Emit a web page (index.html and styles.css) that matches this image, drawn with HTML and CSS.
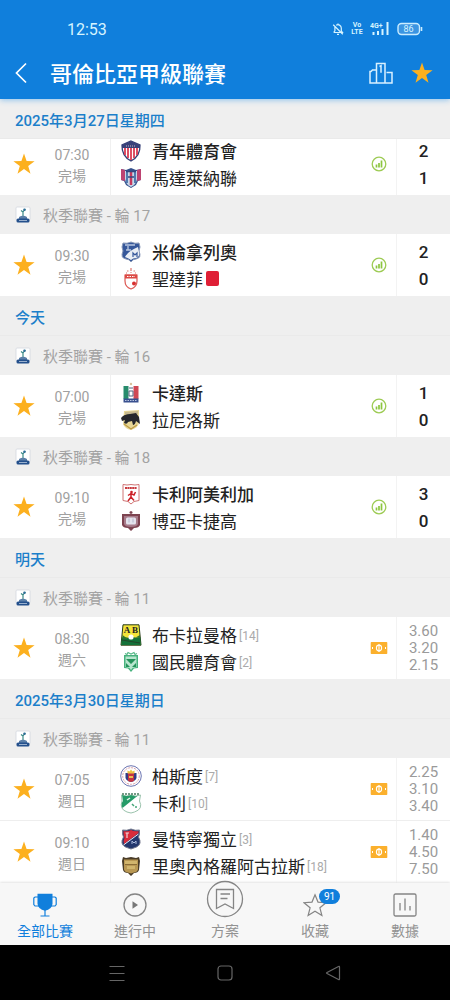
FILE: index.html
```
<!DOCTYPE html>
<html lang="zh-Hant">
<head>
    <meta charset="UTF-8">
    <meta name="viewport" content="width=device-width, initial-scale=1.0">
    <title>哥倫比亞甲級聯賽</title>
    <link rel="stylesheet" href="styles.css">
</head>
<body>

<!-- Shared icons -->
<svg class="sprite" aria-hidden="true">
    <symbol id="star" viewBox="0 0 24 24">
        <path d="M12 1.500l2.600 7.600 8 .1-6.400 4.800 2.300 7.700-6.500-4.600-6.500 4.600 2.300-7.700L1.400 9.200l8-.1z" fill="#fcb01f"/>
    </symbol>
    <symbol id="league" viewBox="0 0 16 18">
        <rect x="1" y="1" width="14" height="13" rx="1" fill="#fff" stroke="#d3d7de" stroke-width=".8"/>
        <path d="M8 10V5.500M8 6l2.200-3M6 4.500l2 1.500" stroke="#3a8a86" stroke-width="1.200" fill="none"/>
        <circle cx="9.500" cy="3.800" r="1.300" fill="#2d6d96"/>
        <path d="M4 11q4-2.500 8 0v2H4z" fill="#5b7fa8"/>
        <rect x="1.500" y="12.500" width="13" height="4" rx="1.500" fill="#24508c"/>
        <path d="M4 14.500h8" stroke="#b7c9df" stroke-width=".8"/>
    </symbol>
    <symbol id="stats" viewBox="0 0 16 16">
        <circle cx="8" cy="8" r="6.800" fill="#fff" stroke="#9dcb54" stroke-width="1.300"/>
        <path d="M5.500 8.500v3M8 7v4.500M10.500 4.500v7" stroke="#8cc63f" stroke-width="1.700"/>
    </symbol>
    <symbol id="ticket" viewBox="0 0 18 14">
        <path d="M1.500 1h15q.8 0 .8.800v10.400q0 .8-.8.800h-15q-.8 0-.8-.8V1.800q0-.8.8-.8z" fill="#fbb02d"/>
        <ellipse cx="9" cy="7" rx="2.600" ry="2.900" fill="none" stroke="#fff" stroke-width="1.100"/>
        <path d="M9 3v8" stroke="#fff" stroke-width="1.100"/>
        <path d="M2.500 6v2M15.500 6v2" stroke="#fff" stroke-width="1"/>
    </symbol>
</svg>

<header class="header">
    <div class="status">
        <span class="clock">12:53</span>
        <div class="status-icons">
            <svg width="12" height="14" viewBox="0 0 12 14" fill="none" stroke="#d6f4ff" stroke-width="1.200">
                <path d="M2 10.500h8.500L9.300 8.800V6A3.300 3.300 0 0 0 4.200 3.300M2.900 5v3.800L1.600 10.500M6 1.500v1M5 12.300h2M1.200 2.800l9.600 9.400"/>
            </svg>
            <span class="volte"><b>Vo</b><b>LTE</b></span>
            <svg width="20" height="14" viewBox="0 0 20 14">
                <text x="0" y="6" class="net">4G+</text>
                <path d="M3.500 10v3M8 9v4M12.500 7v6M17.500 0v13" stroke="#d6f4ff" stroke-width="2"/>
            </svg>
            <svg class="battery" width="26" height="14" viewBox="0 0 26 14">
                <rect x="1" y="1.500" width="21.500" height="11" rx="3.500" fill="#3b95e2" stroke="#c9ecff" stroke-width="1.400"/>
                <path d="M24.500 5v4" stroke="#c9ecff" stroke-width="1.600"/>
                <text x="6.500" y="10" class="charge">86</text>
            </svg>
        </div>
    </div>
    <div class="titlebar">
        <button class="icon-btn back" aria-label="返回">
            <svg width="14" height="22" viewBox="0 0 14 22" fill="none" stroke="#fff" stroke-width="1.700"><path d="M12 1.500L2.500 11l9.500 9.500"/></svg>
        </button>
        <h1>哥倫比亞甲級聯賽</h1>
        <button class="icon-btn" aria-label="排名">
            <svg width="26" height="24" viewBox="0 0 26 24" fill="none" stroke="#d9f1ff" stroke-width="1.500">
                <path d="M8.500 22V2.500h8.500V22M8.500 9H4.500l-1.500 1.500H2V22h22V11.500h-5.500M11.500 5.500l1.500-.8v7"/>
            </svg>
        </button>
        <button class="icon-btn" aria-label="收藏">
            <svg width="24" height="24"><use href="#star"/></svg>
        </button>
    </div>
</header>

<main class="list">
    <h2 class="day">2025年3月27日星期四</h2>
    <article class="match first">
        <button class="fav" aria-label="收藏"><svg width="24" height="24"><use href="#star"/></svg></button>
        <div class="time"><span>07:30</span><span>完場</span></div>
        <div class="teams">
            <div class="team win">
                <svg viewBox="0 0 22 22">
                    <path d="M11 1l9 4q.5 11-9 16Q1.500 16 2 5z" fill="#fff" stroke="#353f77" stroke-width="1.300"/>
                    <path d="M5 8v7M8 8v10M11 8v12M14 8v10M17 8v7" stroke="#d82f49" stroke-width="1.700"/>
                    <path d="M11 1l9 4v3H2V5z" fill="#38417a"/>
                    <path d="M6 6h10" stroke="#c8b0be" stroke-width="1" stroke-dasharray="1 1"/>
                </svg>
                <span>青年體育會</span>
            </div>
            <div class="team">
                <svg viewBox="0 0 22 22">
                    <path d="M1 2l5 1 5-2 5 2 5-1v11l-3 1-2 4-5 3-5-3-2-4-3-1z" fill="#34508c"/>
                    <path d="M1 2l4 1v11l-4-1zM17 3l4-1v11l-4 1z" fill="#bd4372"/>
                    <path d="M5 4h12v8q-1 6-6 8-5-2-6-8z" fill="#c5d7ea"/>
                    <path d="M7 5v11M15 5v11" stroke="#3563a0" stroke-width="1.600"/>
                    <path d="M11 5v13" stroke="#c7385e" stroke-width="2.500"/>
                    <path d="M6 4.500h10M8 10h6" stroke="#34477f" stroke-width="1.500"/>
                </svg>
                <span>馬達萊納聯</span>
            </div>
        </div>
        <div class="info"><svg width="16" height="16"><use href="#stats"/></svg></div>
        <div class="score"><span>2</span><span>1</span></div>
    </article>

    <h3 class="league"><svg width="16" height="18"><use href="#league"/></svg>秋季聯賽 - 輪 17</h3>
    <article class="match">
        <button class="fav" aria-label="收藏"><svg width="24" height="24"><use href="#star"/></svg></button>
        <div class="time"><span>09:30</span><span>完場</span></div>
        <div class="teams">
            <div class="team win">
                <svg viewBox="0 0 22 22">
                    <path d="M3 2q4 1 8-1 4 2 8 1l1 4-1 4q3 7-3 8-3 0-5 3-2-3-5-3-6-1-3-8L2 6z" fill="#35579a" stroke="#8999b8" stroke-width="1"/>
                    <path d="M5 16q3-6 13-10l1 5q1 5-3 6-3 0-5 2-3-2-6-3z" fill="#e9eef5"/>
                    <path d="M5 4h10M8 5v4M6 9h5" stroke="#b9c8e1" stroke-width="1.300"/>
                    <path d="M13 16v-4l2 2 2-2v4" fill="none" stroke="#35579a" stroke-width="1.200"/>
                </svg>
                <span>米倫拿列奧</span>
            </div>
            <div class="team">
                <svg viewBox="0 0 22 22">
                    <path d="M5 7h12v6q0 6-6 8-6-2-6-8z" fill="#fff" stroke="#dc5752" stroke-width="1.200"/>
                    <path d="M5 6.500h12v4H5z" fill="#dc4944"/>
                    <path d="M7 8.500h8" stroke="#fff" stroke-width="1" stroke-dasharray="1.500 1"/>
                    <circle cx="14" cy="15.500" r="2" fill="#d7302f"/>
                    <path d="M11 0v3M7 3h1.500M13.500 3H15M6 5h1M10.500 4.500h1M15 5h1" stroke="#dc7770" stroke-width="1.200"/>
                </svg>
                <span>聖達菲</span><i class="redcard"></i>
            </div>
        </div>
        <div class="info"><svg width="16" height="16"><use href="#stats"/></svg></div>
        <div class="score"><span>2</span><span>0</span></div>
    </article>

    <h2 class="day">今天</h2>
    <h3 class="league"><svg width="16" height="18"><use href="#league"/></svg>秋季聯賽 - 輪 16</h3>
    <article class="match">
        <button class="fav" aria-label="收藏"><svg width="24" height="24"><use href="#star"/></svg></button>
        <div class="time"><span>07:00</span><span>完場</span></div>
        <div class="teams">
            <div class="team win">
                <svg viewBox="0 0 22 22">
                    <rect x="3.500" y="4" width="15" height="13" fill="#fff"/>
                    <path d="M3.500 4h5v13h-5z" fill="#278b6c"/>
                    <path d="M13.500 4h5v13h-5z" fill="#d04754"/>
                    <path d="M3.500 16.500h15v4h-15z" fill="#39508f"/>
                    <path d="M9 6h4M9 9h4v5H9z" fill="none" stroke="#53617e" stroke-width="1"/>
                    <path d="M5 18.500h12" stroke="#b8c4df" stroke-width="1.200" stroke-dasharray="1.500 1"/>
                    <circle cx="11" cy="2" r="1.200" fill="#d9c19a"/>
                </svg>
                <span>卡達斯</span>
            </div>
            <div class="team">
                <svg viewBox="0 0 22 22">
                    <path d="M4 2l15-1v13q-1 5-8 7-6-1-8-6z" fill="#e8d796"/>
                    <path d="M5 3l13-1v3H5z" fill="#c6b991"/>
                    <path d="M1 9q3-4 9-4l6-1 3 4 1 7-4-3q-1 4-3 4l-1-4-4 1q-1 3-4 1l1-3-3 1z" fill="#26272c"/>
                    <path d="M4 15l7 5 6-4" fill="none" stroke="#bd9b45" stroke-width="1.200"/>
                </svg>
                <span>拉尼洛斯</span>
            </div>
        </div>
        <div class="info"><svg width="16" height="16"><use href="#stats"/></svg></div>
        <div class="score"><span>1</span><span>0</span></div>
    </article>

    <h3 class="league"><svg width="16" height="18"><use href="#league"/></svg>秋季聯賽 - 輪 18</h3>
    <article class="match">
        <button class="fav" aria-label="收藏"><svg width="24" height="24"><use href="#star"/></svg></button>
        <div class="time"><span>09:10</span><span>完場</span></div>
        <div class="teams">
            <div class="team win">
                <svg viewBox="0 0 22 22">
                    <path d="M3 1.500q4 1 8 0 4 1 8 0v16l-5 1-3 2.500-3-2.500-5-1z" fill="#fff" stroke="#d07474" stroke-width="1"/>
                    <path d="M5 5h12" stroke="#c93a3f" stroke-width="1.800" stroke-dasharray="2 .4"/>
                    <circle cx="11.500" cy="9" r="1.300" fill="#cc2027"/>
                    <path d="M11 10v4l-3 4M11 14l3 3.500M8 12.500l3-2 3 1.500 1.500-3" fill="none" stroke="#cc2027" stroke-width="1.500"/>
                </svg>
                <span>卡利阿美利加</span>
            </div>
            <div class="team">
                <svg viewBox="0 0 22 22">
                    <path d="M2 4h18v11q-1 3-6 3l-3 3-3-3q-5 0-6-3z" fill="#7d4350"/>
                    <path d="M4 6h14v8q-1 3-7 3-6 0-7-3z" fill="#a77b8a"/>
                    <rect x="6" y="7.500" width="10" height="7" rx="1.500" fill="#e4e3ed"/>
                    <path d="M9 8.500v4M13 8.500v4" stroke="#b5b8cf" stroke-width="1"/>
                    <path d="M11 1v3M9.500 2.500h3" stroke="#7d4350" stroke-width="1.300"/>
                </svg>
                <span>博亞卡捷高</span>
            </div>
        </div>
        <div class="info"><svg width="16" height="16"><use href="#stats"/></svg></div>
        <div class="score"><span>3</span><span>0</span></div>
    </article>

    <h2 class="day">明天</h2>
    <h3 class="league"><svg width="16" height="18"><use href="#league"/></svg>秋季聯賽 - 輪 11</h3>
    <article class="match">
        <button class="fav" aria-label="收藏"><svg width="24" height="24"><use href="#star"/></svg></button>
        <div class="time"><span>08:30</span><span>週六</span></div>
        <div class="teams">
            <div class="team">
                <svg viewBox="0 0 22 22">
                    <path d="M3 .8h16l2 20.400H1z" fill="#f4e43a" stroke="#263918" stroke-width="1"/>
                    <path d="M1.800 13q5 3 9-1 4 3 9.500 1l.5 8H1.200z" fill="#147139"/>
                    <path d="M2.500 11q4 4 8 2 4 2 9.500-2v3l-9-1-8.500 3z" fill="#2f7430"/>
                    <circle cx="11" cy="13" r="2.600" fill="#fff"/>
                    <path d="M2 16l18 3" stroke="#23452a" stroke-width="1"/>
                    <text x="11" y="8.500" text-anchor="middle" class="crest-text">A B</text>
                </svg>
                <span>布卡拉曼格</span><small>[14]</small>
            </div>
            <div class="team">
                <svg viewBox="0 0 22 22">
                    <path d="M4 4h14v13l-4 .5-3 3.500-3-3.500-4-.5z" fill="#47b27d"/>
                    <path d="M5.500 5.500h11v10.500l-4 1-1.500 2-1.500-2-4-1z" fill="#b8e5ce"/>
                    <path d="M6 8h10l-5 5zM6 12l4 4H6zM16 12l-4 4h4z" fill="#25935b"/>
                    <path d="M5 2.500l2 1 1-2 3 1.500 3-1.500 1 2 2-1" fill="none" stroke="#58b989" stroke-width="1.200"/>
                </svg>
                <span>國民體育會</span><small>[2]</small>
            </div>
        </div>
        <div class="info"><svg width="18" height="14"><use href="#ticket"/></svg></div>
        <div class="odds"><span>3.60</span><span>3.20</span><span>2.15</span></div>
    </article>

    <h2 class="day">2025年3月30日星期日</h2>
    <h3 class="league"><svg width="16" height="18"><use href="#league"/></svg>秋季聯賽 - 輪 11</h3>
    <article class="match line">
        <button class="fav" aria-label="收藏"><svg width="24" height="24"><use href="#star"/></svg></button>
        <div class="time"><span>07:05</span><span>週日</span></div>
        <div class="teams">
            <div class="team">
                <svg viewBox="0 0 22 22">
                    <circle cx="11" cy="11" r="10.300" fill="#fff" stroke="#6c75b2" stroke-width="1"/>
                    <circle cx="11" cy="11" r="8.300" fill="none" stroke="#d9a1aa" stroke-width="1" stroke-dasharray="2 1"/>
                    <path d="M5.500 8h11v5q-1 3-5.500 4-4.500-1-5.500-4z" fill="#323d84"/>
                    <path d="M8 8h6v8l-3 1-3-1z" fill="#c43343"/>
                    <path d="M7.500 5.500l2 1 1.500-2 1.500 2 2-1v3h-7z" fill="#ecc442"/>
                    <path d="M9 11h4v2H9z" fill="#eac050"/>
                </svg>
                <span>柏斯度</span><small>[7]</small>
            </div>
            <div class="team">
                <svg viewBox="0 0 22 22">
                    <path d="M1.500 3q5 2 9.500 0 4.500 2 9.500 0l-1 6q4 8-5 11l-3.500 1-4-1q-8-3-5-11z" fill="#fff" stroke="#9bc3ad" stroke-width="1"/>
                    <path d="M2 3q5 2 9 0 4 2 7 .5L2.500 16q-2-4 .5-7z" fill="#269b68"/>
                    <path d="M2 2h18" stroke="#497b60" stroke-width="1.500" stroke-dasharray="2 1"/>
                    <path d="M7 8l3-2" stroke="#e3f4ea" stroke-width="1.500"/>
                    <path d="M12 12l2 2M16 14v2" stroke="#45a679" stroke-width="1.500"/>
                </svg>
                <span>卡利</span><small>[10]</small>
            </div>
        </div>
        <div class="info"><svg width="18" height="14"><use href="#ticket"/></svg></div>
        <div class="odds"><span>2.25</span><span>3.10</span><span>3.40</span></div>
    </article>
    <article class="match">
        <button class="fav" aria-label="收藏"><svg width="24" height="24"><use href="#star"/></svg></button>
        <div class="time"><span>09:10</span><span>週日</span></div>
        <div class="teams">
            <div class="team">
                <svg viewBox="0 0 22 22">
                    <path d="M2.500 2q4 1 8.500-1 4.500 2 8.500 1v4l-1 3q4 7-2 10l-5.500 2-5.500-2q-6-3-2-10l-1-3z" fill="#22366d" stroke="#777b8f" stroke-width="1"/>
                    <path d="M3.500 3q4 1 7.500-1 4 2 7.500 1v2L4 16q-1-3 .5-6l-1-4z" fill="#d92c3b"/>
                    <path d="M3.500 17L18.500 6" stroke="#e8e8f0" stroke-width="1"/>
                    <path d="M7 5v5M5.500 5H9" stroke="#eed6dc" stroke-width="1.200"/>
                    <path d="M12 16v-3l2 2 2-2v3" fill="none" stroke="#aab9dc" stroke-width="1"/>
                </svg>
                <span>曼特寧獨立</span><small>[3]</small>
            </div>
            <div class="team">
                <svg viewBox="0 0 22 22">
                    <path d="M3 2l3 1 5-1 5 1 3-1 1 4-1 9q-1 3-5 3l-3 3-3-3q-4 0-5-3L2 6z" fill="#493b27"/>
                    <path d="M4 4.500h14v10q-1 3-4 3l-3 1-3-1q-3 0-4-3z" fill="#b99853"/>
                    <path d="M5 6h12v3H5zM7 11h8v3H7z" fill="#d1b56d"/>
                    <path d="M5 9.500h12" stroke="#8b6c36" stroke-width="1"/>
                </svg>
                <span>里奧內格羅阿古拉斯</span><small>[18]</small>
            </div>
        </div>
        <div class="info"><svg width="18" height="14"><use href="#ticket"/></svg></div>
        <div class="odds"><span>1.40</span><span>4.50</span><span>7.50</span></div>
    </article>
</main>

<footer class="footer">
    <nav class="tabs">
        <a href="#" class="tab active">
            <svg width="24" height="24" viewBox="0 0 24 24">
                <path d="M4.500.8h15v10q-.5 5.500-7.500 7-7-1.500-7.500-7z" fill="#107fdc"/>
                <path d="M5 4H2L.8 5v6.500L2 13h4M19 4h3l1.200 1v6.500L22 13h-4M12 17v5.500M7.500 23h9" fill="none" stroke="#107fdc" stroke-width="1.200"/>
            </svg>
            <span>全部比賽</span>
        </a>
        <a href="#" class="tab">
            <svg width="24" height="24" viewBox="0 0 24 24">
                <circle cx="12" cy="12" r="11" fill="none" stroke="#858585" stroke-width="1.300"/>
                <path d="M9.500 8.300v7.400l5.500-3.700z" fill="#777"/>
            </svg>
            <span>進行中</span>
        </a>
        <a href="#" class="tab plan">
            <svg width="38" height="38" viewBox="0 0 38 38" fill="none" stroke="#858585" stroke-width="1.300">
                <circle cx="19" cy="19" r="17.500" fill="#f7f7f7"/>
                <path d="M10.500 9.500h17v19L19 24l-8.500 4.500zM14.500 14h9.500M14.500 18.500h7"/>
            </svg>
            <span>方案</span>
        </a>
        <a href="#" class="tab">
            <svg width="24" height="24" viewBox="0 0 24 24" fill="none" stroke="#858585" stroke-width="1.200">
                <path d="M12 1.800l3 7.300 8 .6-6.100 5.100 2 7.700-6.900-4.200-6.900 4.200 2-7.700L1 9.700l8-.6z"/>
            </svg>
            <b class="badge">91</b>
            <span>收藏</span>
        </a>
        <a href="#" class="tab">
            <svg width="24" height="24" viewBox="0 0 24 24" fill="none" stroke="#858585" stroke-width="1.300">
                <rect x="1" y="1" width="22" height="22" rx="1.500"/>
                <path d="M7 10v7.500M12 5.500v12M17 13v4.500"/>
            </svg>
            <span>數據</span>
        </a>
    </nav>
    <div class="sysbar">
        <button aria-label="選單"><svg width="18" height="18" viewBox="0 0 18 18" fill="none" stroke="#666" stroke-width="1"><path d="M1.500 2.500h15M1.500 9.500h15M1.500 16.500h15"/></svg></button>
        <button aria-label="主頁"><svg width="18" height="18" viewBox="0 0 18 18" fill="none" stroke="#666" stroke-width="1.200"><rect x="2" y="2" width="14" height="14" rx="3"/></svg></button>
        <button aria-label="上一頁"><svg width="18" height="18" viewBox="0 0 18 18" fill="none" stroke="#666" stroke-width="1.200"><path d="M15.500 3v12q0 1-1 .5L3 9.500q-1-.5 0-1L14.500 2.500q1-.5 1 .5z"/></svg></button>
    </div>
</footer>

</body>
</html>
```
FILE: styles.css
```
* {
    box-sizing: border-box;
}

body {
    margin: 0;
    min-height: 100vh;
    display: flex;
    flex-direction: column;
    background: #efefef;
    color: #222;
    font-family: Roboto, "Noto Sans CJK TC", sans-serif;
}

button {
    border: 0;
    padding: 0;
    background: none;
    cursor: pointer;
}

svg {
    display: block;
    flex: none;
}

.sprite {
    position: absolute;
    width: 0;
    height: 0;
}

/* Header */
.header {
    position: sticky;
    top: 0;
    z-index: 3;
    height: 99px;
    background: #107fdc;
    box-shadow: 0 1px 6px #8cc1ec;
}

.status {
    display: flex;
    justify-content: space-between;
    align-items: center;
    height: 50px;
    padding: 8px 27px 0 67px;
    color: #d6f4ff;
}

.clock {
    font-size: 16px;
}

.status-icons {
    display: flex;
    align-items: center;
    gap: 7px;
}

.volte {
    display: flex;
    flex-direction: column;
    align-items: center;
    width: 12px;
    font-size: 7px;
    line-height: 7px;
}

.net {
    font-size: 7px;
    font-weight: 700;
    fill: #d6f4ff;
}

.charge {
    font-size: 9px;
    fill: #d6f4ff;
}

.titlebar {
    display: flex;
    align-items: center;
    height: 45px;
    padding: 0 16px 0 14px;
    gap: 16px;
}

.titlebar h1 {
    flex: 1;
    margin: 0;
    padding: 0 0 2px 6px;
    color: #fff;
    font-size: 22px;
    font-weight: 500;
}

/* Match list */
.list {
    flex: 1;
}

.day {
    position: relative;
    z-index: 1;
    display: flex;
    align-items: center;
    height: 40px;
    margin: 0;
    padding: 2px 0 0 15px;
    background: #efefef;
    border-bottom: 1px solid #eaeaea;
    color: #1c7fca;
    font-size: 15px;
    font-weight: 500;
}

.league {
    display: flex;
    align-items: center;
    gap: 12px;
    height: 39px;
    margin: 0;
    padding-left: 15px;
    color: #a3a3a3;
    font-size: 15px;
    font-weight: 400;
}

.match {
    display: grid;
    grid-template-columns: 34px 77px 1fr 36px 53px;
    height: 62px;
    background: #fff;
}

/* scrolled partly under the day bar */
.match.first {
    margin-top: -6px;
}

.match.line {
    height: 63px;
    border-bottom: 1px solid #eee;
}

.fav {
    display: flex;
    align-items: center;
    padding-left: 12px;
}

.time {
    display: flex;
    flex-direction: column;
    justify-content: center;
    align-items: center;
    padding-top: 3px;
    border-right: 1px solid #f0f0f0;
    color: #a0a0a0;
    font-size: 14px;
    line-height: 21px;
}

.teams {
    padding: 4px 0 0 9px;
    min-width: 0;
}

.team {
    display: flex;
    align-items: center;
    height: 27px;
    font-size: 17px;
    white-space: nowrap;
}

.team svg {
    width: 22px;
    height: 22px;
    margin-right: 10px;
}

.team small {
    padding: 2px 0 0 2px;
    color: #aaa;
    font-size: 12px;
}

.crest-text {
    font-family: "Liberation Serif", serif;
    font-size: 9px;
    font-weight: 700;
    fill: #222;
}

.win {
    font-weight: 500;
}

.redcard {
    width: 13px;
    height: 15px;
    margin-left: 3px;
    border-radius: 2px;
    background: #df1f36;
}

.info {
    display: flex;
    justify-content: center;
    align-items: center;
    padding-left: 1px;
    border-right: 1px solid #f3f3f3;
}

.score,
.odds {
    display: flex;
    flex-direction: column;
    align-items: center;
}

.score {
    padding-top: 5px;
    font-size: 17px;
    font-weight: 500;
    line-height: 27px;
}

.odds {
    padding-top: 6px;
    color: #9a9a9a;
    font-size: 15px;
    line-height: 17px;
}

/* Bottom bars */
.footer {
    position: sticky;
    bottom: 0;
    z-index: 2;
}

.tabs {
    display: grid;
    grid-template-columns: repeat(5, 1fr);
    grid-template-rows: 62px;
    background: #f7f7f7;
    box-shadow: 0 -1px 2px #e4e4e4;
}

/* the plan icon is taller than the bar and sticks out on top */
.tab {
    position: relative;
    display: flex;
    flex-direction: column;
    justify-content: flex-end;
    align-items: center;
    gap: 4px;
    padding-bottom: 3px;
    color: #929292;
    font-size: 14px;
    line-height: 21px;
    text-decoration: none;
}

.tab.plan {
    gap: 3px;
}

.tab.active {
    color: #107fdc;
}

.badge {
    position: absolute;
    top: 6px;
    left: 50%;
    margin-left: 4px;
    padding: 0 5px;
    border-radius: 8px;
    background: #107fdc;
    color: #fff;
    font-size: 10px;
    font-weight: 400;
    line-height: 15px;
}

.sysbar {
    display: flex;
    justify-content: center;
    align-items: center;
    gap: 90px;
    height: 55px;
    background: #000;
}
```
